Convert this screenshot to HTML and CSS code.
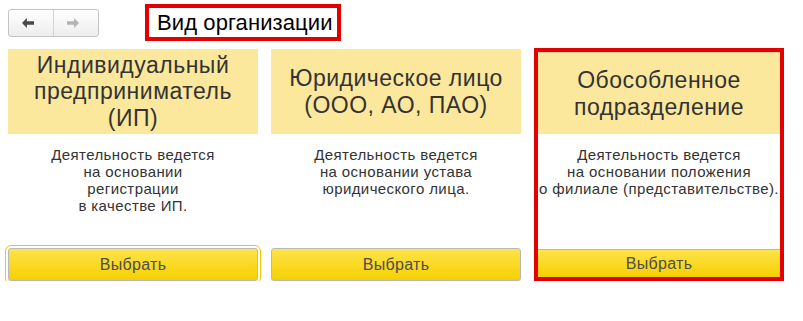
FILE: index.html
```html
<!DOCTYPE html>
<html lang="ru">
<head>
<meta charset="utf-8">
<title>Вид организации</title>
<link rel="stylesheet" href="styles.css">
</head>
<body>
<div class="topbar">
  <div class="nav">
    <button class="nav-btn nav-back" type="button" aria-label="Назад">
      <svg width="11" height="9" viewBox="0 0 11 9"><path d="M0 4.5 L4.5 0 L4.5 3 L11 3 L11 6 L4.5 6 L4.5 9 Z" fill="#4a4a4a"/></svg>
    </button>
    <button class="nav-btn nav-fwd" type="button" aria-label="Вперёд">
      <svg width="11" height="9" viewBox="0 0 11 9"><path d="M11 4.5 L6.5 0 L6.5 3 L0 3 L0 6 L6.5 6 L6.5 9 Z" fill="#b4b4b4"/></svg>
    </button>
  </div>
  <div class="title">Вид организации</div>
</div>
<div class="cards">
  <div class="card">
    <div class="card-head">Индивидуальный<br>предприниматель<br>(ИП)</div>
    <div class="card-body">Деятельность ведется<br>на основании<br>регистрации<br>в качестве ИП.</div>
    <button class="choose focused" type="button">Выбрать</button>
  </div>
  <div class="card">
    <div class="card-head">Юридическое лицо<br>(ООО, АО, ПАО)</div>
    <div class="card-body">Деятельность ведется<br>на основании устава<br>юридического лица.</div>
    <button class="choose" type="button">Выбрать</button>
  </div>
  <div class="card card-marked">
    <div class="card-head">Обособленное<br>подразделение</div>
    <div class="card-body">Деятельность ведется<br>на основании положения<br>о филиале (представительстве).</div>
    <button class="choose" type="button">Выбрать</button>
  </div>
</div>
</body>
</html>
```

FILE: styles.css
```css
* { box-sizing: border-box; }
html, body {
  margin: 0;
  padding: 0;
  background: #ffffff;
  font-family: "Liberation Sans", Arial, sans-serif;
  color: #333333;
}
.topbar {
  display: flex;
  align-items: center;
  height: 48px;
  padding: 0 0 3px 8px;
}
.nav {
  display: flex;
  width: 91px;
  height: 28px;
  border: 1px solid #c4c4c4;
  border-radius: 3px;
  background: linear-gradient(#ffffff, #ededed);
  overflow: hidden;
}
.nav-btn {
  flex: 1;
  border: 0;
  margin: 0;
  padding: 0 6px 0 0;
  background: transparent;
  display: flex;
  align-items: center;
  justify-content: center;
}
.nav-btn svg { width: 12px; height: 10px; }
.nav-back { border-right: 1px solid #d4d4d4; }
.title {
  margin-left: 46px;
  height: 37px;
  border: 4px solid #e30000;
  padding: 0 4px 0 8px;
  font-size: 22px;
  letter-spacing: 0.1px;
  line-height: 29px;
  color: #000000;
  white-space: nowrap;
}
.cards {
  display: grid;
  grid-template-columns: 250px 250px 250px;
  column-gap: 13px;
  padding-left: 8px;
}
.card {
  height: 233px;
  padding-top: 1px;
  display: flex;
  flex-direction: column;
}
.card-head {
  height: 85px;
  background: #fbe89d;
  display: flex;
  align-items: center;
  justify-content: center;
  text-align: center;
  font-size: 23px;
  letter-spacing: 0.5px;
  line-height: 26.5px;
  color: #333333;
}
.card-body {
  flex: 1;
  padding-top: 12px;
  text-align: center;
  font-size: 15px;
  letter-spacing: 0.4px;
  line-height: 17px;
  color: #333333;
}
.choose {
  height: 33px;
  margin: 0;
  border: 1px solid #b9b9b9;
  border-radius: 3px;
  background: linear-gradient(#ffe34a, #f5d000);
  font-family: "Liberation Sans", Arial, sans-serif;
  font-size: 16px;
  letter-spacing: 0.3px;
  color: #4d4d4d;
  box-shadow: 0 1px 1px rgba(0,0,0,0.15);
}
.choose.focused {
  outline: 1px solid #f2c500;
  outline-offset: 2px;
}
.card-marked {
  padding-top: 0;
  border: 4px solid #e30000;
}
.card-marked .card-head {
  height: 82px;
  border-top: 1px solid #d9cf9e;
}
.card-marked .choose {
  height: 28px;
  border-radius: 0;
  border-left: 0;
  border-right: 0;
  border-bottom: 0;
  box-shadow: none;
}
```
